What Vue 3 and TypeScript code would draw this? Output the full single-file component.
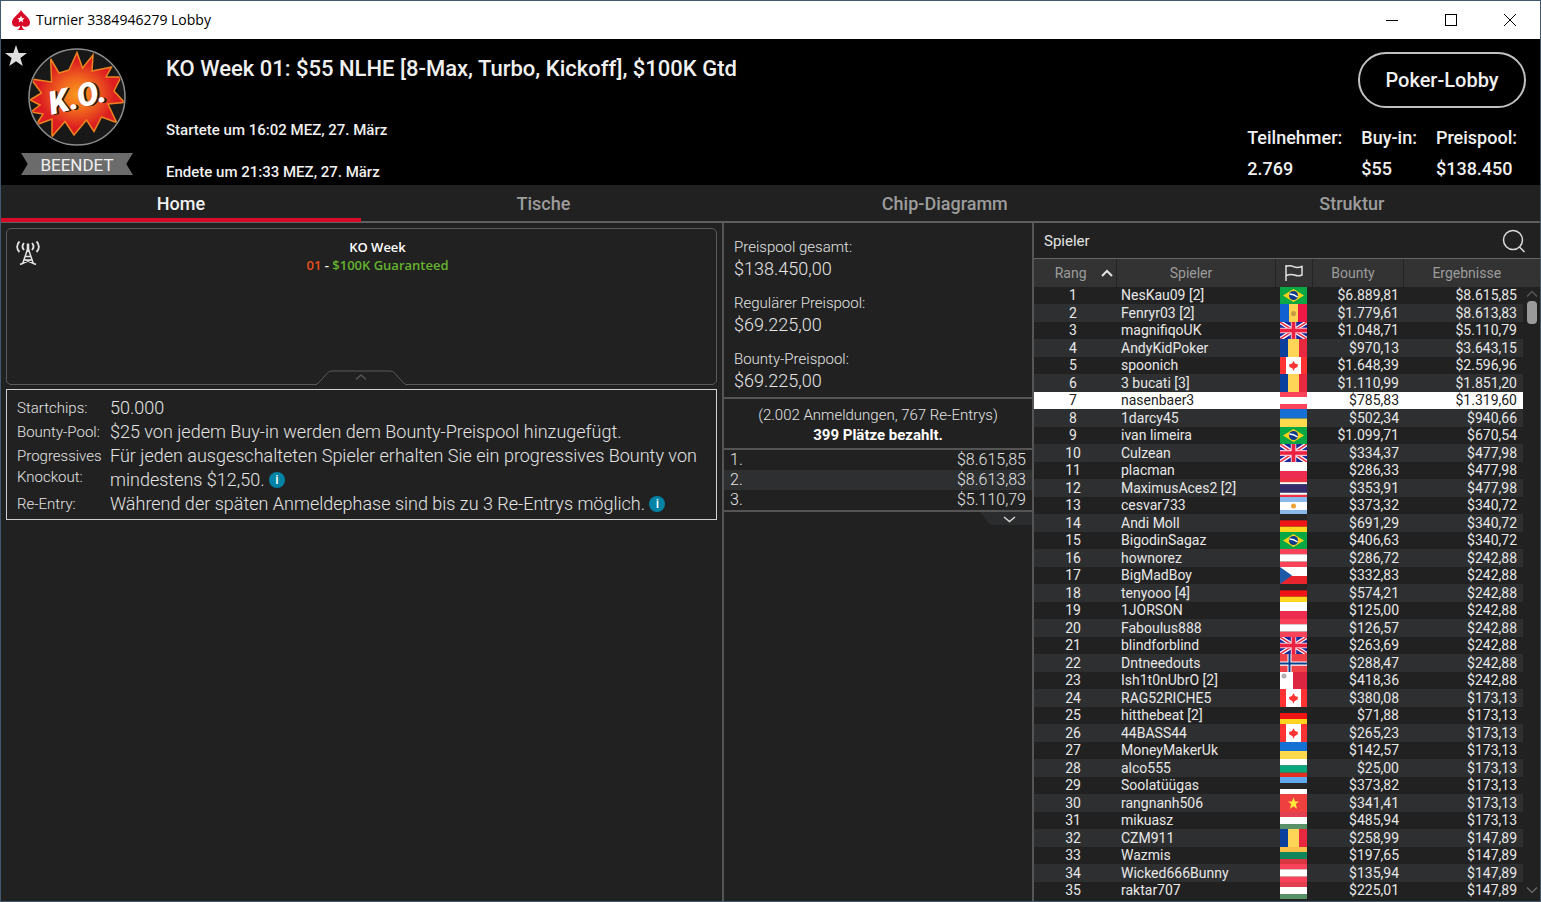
<script setup lang="ts">
interface Stripe { c: string; s: number }
interface Flag { dir: 'h' | 'v'; stripes: Stripe[] }
interface Player { rank: number; name: string; flag: string; bounty: string; result: string }

const tabs = ['Home', 'Tische', 'Chip-Diagramm', 'Struktur']

const stats = [
  { label: 'Teilnehmer:', value: '2.769' },
  { label: 'Buy-in:', value: '$55' },
  { label: 'Preispool:', value: '$138.450' },
]

const pools = [
  { label: 'Preispool gesamt:', value: '$138.450,00' },
  { label: 'Regulärer Preispool:', value: '$69.225,00' },
  { label: 'Bounty-Preispool:', value: '$69.225,00' },
]

const payouts = [
  { place: '1.', amount: '$8.615,85' },
  { place: '2.', amount: '$8.613,83' },
  { place: '3.', amount: '$5.110,79' },
]

const details = [
  { label: 'Startchips:', text: '50.000', info: false },
  { label: 'Bounty-Pool:', text: '$25 von jedem Buy-in werden dem Bounty-Preispool hinzugefügt.', info: false },
  { label: 'Progressives Knockout:', text: 'Für jeden ausgeschalteten Spieler erhalten Sie ein progressives Bounty von mindestens $12,50.', info: true },
  { label: 'Re-Entry:', text: 'Während der späten Anmeldephase sind bis zu 3 Re-Entrys möglich.', info: true },
]

const stripes = (dir: 'h' | 'v', ...parts: [string, number][]): Flag => ({
  dir,
  stripes: parts.map(([c, s]) => ({ c, s })),
})

const flags: Record<string, Flag> = {
  br: stripes('h', ['#0aa844', 17]),
  ad: stripes('v', ['#1160d2', 9], ['#fdd350', 9], ['#ee1846', 9]),
  gb: stripes('h', ['#1a2a9c', 17]),
  ro: stripes('v', ['#0b3f9e', 8], ['#ffd558', 11], ['#e8283f', 8]),
  ca: stripes('v', ['#ff3333', 6], ['#ffffff', 15], ['#ff3333', 6]),
  at: stripes('h', ['#f9435a', 5], ['#ffffff', 7], ['#f9435a', 5]),
  ua: stripes('h', ['#1670d4', 9], ['#ffd94e', 8]),
  pl: stripes('h', ['#ffffff', 9], ['#ec2d50', 8]),
  th: stripes('h', ['#f03040', 3], ['#ffffff', 2], ['#322c6b', 8], ['#ffffff', 2], ['#f03040', 2]),
  ar: stripes('h', ['#89b9ea', 5], ['#ffffff', 8], ['#89b9ea', 4]),
  de: stripes('h', ['#262626', 6], ['#f01414', 6], ['#ffd520', 5]),
  cz: stripes('h', ['#ffffff', 9], ['#e8252c', 8]),
  no: stripes('h', ['#ef4147', 17]),
  mt: stripes('v', ['#ffffff', 13], ['#dc2540', 14]),
  bg: stripes('h', ['#ffffff', 6], ['#0aa87c', 7], ['#e03020', 4]),
  ee: stripes('h', ['#5fa8ee', 6], ['#262626', 6], ['#ffffff', 5]),
  vn: stripes('h', ['#ef4040', 17]),
  hu: stripes('h', ['#e04050', 5], ['#ffffff', 7], ['#589068', 5]),
  lt: stripes('h', ['#fcc04a', 5], ['#12855c', 7], ['#d83640', 5]),
}

const flagRects = (code: string) => {
  const flag = flags[code]
  let at = 0
  return flag.stripes.map(({ c, s }) => {
    const rect = flag.dir === 'h'
      ? { x: 0, y: at, width: 27, height: s, fill: c }
      : { x: at, y: 0, width: s, height: 17, fill: c }
    at += s
    return rect
  })
}

const rows: [string, string, string, string][] = [
  ['NesKau09 [2]', 'br', '6.889,81', '8.615,85'],
  ['Fenryr03 [2]', 'ad', '1.779,61', '8.613,83'],
  ['magnifiqoUK', 'gb', '1.048,71', '5.110,79'],
  ['AndyKidPoker', 'ro', '970,13', '3.643,15'],
  ['spoonich', 'ca', '1.648,39', '2.596,96'],
  ['3 bucati [3]', 'ro', '1.110,99', '1.851,20'],
  ['nasenbaer3', 'at', '785,83', '1.319,60'],
  ['1darcy45', 'ua', '502,34', '940,66'],
  ['ivan limeira', 'br', '1.099,71', '670,54'],
  ['Culzean', 'gb', '334,37', '477,98'],
  ['placman', 'pl', '286,33', '477,98'],
  ['MaximusAces2 [2]', 'th', '353,91', '477,98'],
  ['cesvar733', 'ar', '373,32', '340,72'],
  ['Andi Moll', 'de', '691,29', '340,72'],
  ['BigodinSagaz', 'br', '406,63', '340,72'],
  ['hownorez', 'at', '286,72', '242,88'],
  ['BigMadBoy', 'cz', '332,83', '242,88'],
  ['tenyooo [4]', 'de', '574,21', '242,88'],
  ['1JORSON', 'pl', '125,00', '242,88'],
  ['Faboulus888', 'at', '126,57', '242,88'],
  ['blindforblind', 'gb', '263,69', '242,88'],
  ['Dntneedouts', 'no', '288,47', '242,88'],
  ['Ish1t0nUbrO [2]', 'mt', '418,36', '242,88'],
  ['RAG52RICHE5', 'ca', '380,08', '173,13'],
  ['hitthebeat [2]', 'de', '71,88', '173,13'],
  ['44BASS44', 'ca', '265,23', '173,13'],
  ['MoneyMakerUk', 'ua', '142,57', '173,13'],
  ['alco555', 'bg', '25,00', '173,13'],
  ['Soolatüügas', 'ee', '373,82', '173,13'],
  ['rangnanh506', 'vn', '341,41', '173,13'],
  ['mikuasz', 'hu', '485,94', '173,13'],
  ['CZM911', 'ro', '258,99', '147,89'],
  ['Wazmis', 'lt', '197,65', '147,89'],
  ['Wicked666Bunny', 'at', '135,94', '147,89'],
  ['raktar707', 'hu', '225,01', '147,89'],
]

const players: Player[] = rows.map(([name, flag, bounty, result], i) => ({
  rank: i + 1, name, flag, bounty: '$' + bounty, result: '$' + result,
}))
</script>

<template>
  <div class="window">
    <div class="titlebar">
      <svg class="spade" width="20" height="22" viewBox="0 0 20 22" aria-hidden="true">
        <path d="M10 1C8 5 1 8.500 1 13.500C1 18 6 19 9 16.500C9 19 8 20 6 21H14C12 20 11 19 11 16.500C14 19 19 18 19 13.500C19 8.500 12 5 10 1Z" fill="#d70a28" />
        <path d="M10 6.500L11 9L13.600 9.200L11.600 10.900L12.300 13.500L10 12L7.700 13.500L8.400 10.900L6.400 9.200L9 9Z" fill="#fff" />
      </svg>
      <span class="caption">Turnier 3384946279 Lobby</span>
      <div class="controls">
        <button type="button" aria-label="Minimieren"><svg width="12" height="12" viewBox="0 0 12 12" shape-rendering="crispEdges"><path d="M0 6H12V7H0Z" fill="#000" /></svg></button>
        <button type="button" aria-label="Maximieren"><svg width="12" height="12" viewBox="0 0 12 12" shape-rendering="crispEdges"><rect x="0.5" y="0.5" width="11" height="11" fill="none" stroke="#000" /></svg></button>
        <button type="button" aria-label="Schließen"><svg width="12" height="12" viewBox="0 0 12 12"><path d="M0 0L12 12M12 0L0 12" stroke="#000" /></svg></button>
      </div>
    </div>

    <header class="header">
      <div class="badge">
        <svg class="star" width="22" height="22" viewBox="0 0 22 22" aria-hidden="true">
          <path d="M11 0L13.700 7.900L22 8L15.400 13L17.800 21L11 16.300L4.200 21L6.600 13L0 8L8.300 7.900Z" fill="#dedede" />
        </svg>
        <svg class="logo" width="98" height="98" viewBox="0 0 98 98" role="img" aria-label="K.O.">
          <defs>
            <radialGradient id="blast"><stop offset="0" stop-color="#f99a1c" /><stop offset="0.4" stop-color="#f0641e" /><stop offset="0.8" stop-color="#dc1e20" /></radialGradient>
            <clipPath id="disc"><circle cx="49" cy="49" r="47" /></clipPath>
          </defs>
          <circle cx="49" cy="49" r="48" fill="#181818" stroke="#8d8d8d" stroke-width="1.500" />
          <g clip-path="url(#disc)">
            <path d="M22.700 11L31 25L41 22L49 4.500L54.500 20L65 7L64 23L83.500 19L78 29L93 29L86 43L96.500 54.500L80 56L88.500 74.500L73.500 69L66 83.500L58.500 72L46 87L37 73.500L24 88.500L24 71L8 77L15 66L3 64L12 57L2 52L13.500 45L3 31L23.500 34Z" fill="url(#blast)" stroke="#ee8420" stroke-width="1.500" />
          </g>
          <g transform="rotate(-14 49 49)" class="ko">
            <text x="51" y="61" text-anchor="middle" fill="#2a1a14">K.O.</text>
            <text x="49" y="60" text-anchor="middle" fill="#fff">K.O.</text>
          </g>
        </svg>
        <span class="ribbon">BEENDET</span>
      </div>
      <div class="event">
        <h1>KO Week 01: $55 NLHE [8-Max, Turbo, Kickoff], $100K Gtd</h1>
        <p>Startete um 16:02 MEZ, 27. März</p>
        <p>Endete um 21:33 MEZ, 27. März</p>
      </div>
      <div class="summary">
        <button type="button" class="lobby">Poker-Lobby</button>
        <dl class="stats">
          <div v-for="s in stats" :key="s.label"><dt>{{ s.label }}</dt><dd>{{ s.value }}</dd></div>
        </dl>
      </div>
    </header>

    <nav class="tabs">
      <button v-for="(t, i) in tabs" :key="t" type="button" :class="{ active: i === 0 }">{{ t }}</button>
    </nav>

    <main class="content">
      <section class="left">
        <div class="promo">
          <svg class="antenna" width="24" height="26" viewBox="0 0 24 26" fill="none" stroke="#e4e4e4" stroke-width="1.500" aria-hidden="true">
            <path d="M12 8L6.500 24M12 8L17.500 24M9.500 16.500H14.500M8 20H16M4 24.500L15.500 19.500M20 24.500L8.500 19.500" />
            <path d="M12 3.500V12" stroke-width="2.500" />
            <path d="M8 3C6.300 5 6.300 8 8 10M16 3C17.700 5 17.700 8 16 10M3.500 1.500C0.300 4.500 0.300 9 3.500 12M20.500 1.500C23.700 4.500 23.700 9 20.500 12" stroke-width="1.800" />
          </svg>
          <p class="promo-text">KO Week<br><span class="num">01</span> - <span class="gtd">$100K Guaranteed</span></p>
          <button type="button" class="collapse" aria-label="Einklappen">
            <svg width="88" height="15" viewBox="0 0 88 15" fill="none">
              <path d="M0 14H2L10 4C12 2 13 1.500 16 1.500H72C75 1.500 76 2 78 4L86 14H88V15H0Z" fill="#212121" />
              <path d="M0 13.500H1L10 3.500C12 1.500 13 1 16 1H72C75 1 76 1.500 78 3.500L87 13.500H88" stroke="#5a5a5a" />
              <path d="M39 9.500L44 5L49 9.500" stroke="#555" stroke-width="1.500" />
            </svg>
          </button>
        </div>
        <dl class="details">
          <template v-for="d in details" :key="d.label">
            <dt>{{ d.label }}</dt>
            <dd>{{ d.text }} <button v-if="d.info" type="button" class="info" aria-label="Info">i</button></dd>
          </template>
        </dl>
      </section>

      <section class="middle">
        <dl class="pools">
          <template v-for="p in pools" :key="p.label"><dt>{{ p.label }}</dt><dd>{{ p.value }}</dd></template>
        </dl>
        <div class="entries"><p>(2.002 Anmeldungen, 767 Re-Entrys)</p><p class="paid">399 Plätze bezahlt.</p></div>
        <table class="payouts">
          <tbody><tr v-for="p in payouts" :key="p.place"><td>{{ p.place }}</td><td>{{ p.amount }}</td></tr></tbody>
        </table>
        <button type="button" class="expand" aria-label="Mehr anzeigen">
          <svg width="52" height="14" viewBox="0 0 52 14" fill="none"><path d="M0 0H52V13H14C10 13 9 12 7 9Z" fill="#2b2c2d" /><path d="M24 5L29.500 9.500L35 5" stroke="#d8d8d8" stroke-width="1.500" /></svg>
        </button>
      </section>

      <section class="right">
        <div class="search">
          <h2>Spieler</h2>
          <button type="button" aria-label="Suchen"><svg width="24" height="24" viewBox="0 0 24 24" fill="none" stroke="#dcdcdc" stroke-width="1.500"><circle cx="11" cy="11" r="9.500" /><path d="M17.500 18L22.500 23" /></svg></button>
        </div>
        <div class="list">
          <table class="players">
            <colgroup><col class="c-rank"><col class="c-name"><col class="c-flag"><col class="c-bounty"><col></colgroup>
            <thead>
              <tr>
                <th scope="col"><span class="rank-head">Rang <svg width="12" height="8" viewBox="0 0 12 8" fill="none"><path d="M1 7L6 2L11 7" stroke="#e4e4e4" stroke-width="2" /></svg></span></th>
                <th scope="col" class="shifted">Spieler</th>
                <th scope="col" aria-label="Land"><svg class="pennant" width="18" height="16" viewBox="0 0 18 16" fill="none" stroke="#e0e0e0" stroke-width="1.500"><path d="M1 0V16M1 1.500C5 0 7 1 9.500 2C12 3 14 2.500 17 1.500V10C14 11.500 12 11 9.500 10C7 9 5 9 1 10.500" /></svg></th>
                <th scope="col" class="shifted">Bounty</th>
                <th scope="col">Ergebnisse</th>
              </tr>
            </thead>
            <tbody>
              <tr v-for="p in players" :key="p.rank" :class="{ me: p.rank === 7 }">
                <td>{{ p.rank }}</td>
                <td>{{ p.name }}</td>
                <td>
                  <svg class="flag" viewBox="0 0 27 17" preserveAspectRatio="none" aria-hidden="true">
                    <rect v-for="(r, i) in flagRects(p.flag)" :key="i" v-bind="r" />
                    <g v-if="p.flag === 'br'"><path d="M13.500 2L24 8.500L13.500 15L3 8.500Z" fill="#fbd116" /><circle cx="13.500" cy="8.500" r="4.500" fill="#0b3a8c" /><path d="M9.500 7C12 7 15 8 17.500 10" stroke="#fff" stroke-width="1.500" fill="none" /></g>
                    <g v-else-if="p.flag === 'gb'" fill="none">
                      <path d="M0 0L27 17M27 0L0 17" stroke="#fff" stroke-width="4" /><path d="M0 0L27 17M27 0L0 17" stroke="#ec3048" stroke-width="1.500" />
                      <path d="M13.500 0V17M0 8.500H27" stroke="#f4c4d0" stroke-width="5.500" /><path d="M13.500 0V17M0 8.500H27" stroke="#ec2040" stroke-width="3.500" />
                    </g>
                    <path v-else-if="p.flag === 'ca'" d="M13.500 4L15 6.500L18 7.500L17.500 10L14.500 11.500L13.500 14L12.500 11.500L9.500 10L9 7.500L12 6.500Z" fill="#ff3333" />
                    <path v-else-if="p.flag === 'cz'" d="M0 0L12 8.500L0 17Z" fill="#1c5aa5" />
                    <path v-else-if="p.flag === 'vn'" d="M13.500 3L15 7L19 7L15.800 9.500L17 14L13.500 11.500L10 14L11.200 9.500L8 7L12 7Z" fill="#ffea3a" />
                    <circle v-else-if="p.flag === 'ad'" cx="13.500" cy="9" r="2.500" fill="#c79a45" />
                    <circle v-else-if="p.flag === 'ar'" cx="13.500" cy="9" r="2.500" fill="#eda33c" />
                    <circle v-else-if="p.flag === 'mt'" cx="4" cy="4" r="2.500" fill="#b4b0b0" />
                    <g v-else-if="p.flag === 'no'"><path d="M9.500 0V17M0 9H27" stroke="#fff" stroke-width="4" /><path d="M9.500 0V17M0 9H27" stroke="#0b4090" stroke-width="2" /></g>
                  </svg>
                </td>
                <td>{{ p.bounty }}</td>
                <td>{{ p.result }}</td>
              </tr>
            </tbody>
          </table>
          <div class="rail" aria-hidden="true">
            <div class="rail-head"></div>
            <svg width="12" height="14" viewBox="0 0 12 14" fill="none"><path d="M1 9.500L6 4.500L11 9.500" stroke="#555" stroke-width="1.500" /></svg>
            <div class="thumb"></div>
            <svg class="down" width="12" height="14" viewBox="0 0 12 14" fill="none"><path d="M1 4.500L6 9.500L11 4.500" stroke="#666" stroke-width="1.500" /></svg>
          </div>
        </div>
      </section>
    </main>
  </div>
</template>

<style>
body { margin: 0; background: #212121; }
</style>

<style scoped>
* { box-sizing: border-box; margin: 0; }
button { border: 0; padding: 0; background: none; color: inherit; font: inherit; cursor: pointer; }
svg { display: block; }
.window { min-height: 100vh; display: flex; flex-direction: column; border: 1px solid #43586c; background: #212121; color: #e4e4e4; font-family: Roboto, "Liberation Sans", sans-serif; }

.titlebar { display: flex; align-items: center; height: 38px; padding: 0 1px 0 10px; background: #fff; color: #000; }
.caption { margin-left: 5px; padding-bottom: 2px; font: 14px "Open Sans", "Noto Sans", sans-serif; }
.controls { display: flex; margin-left: auto; }
.controls button { display: grid; place-items: center; width: 59px; height: 38px; }

.header { display: flex; min-height: 146px; background: #000; color: #f0f0f0; }
.badge { position: relative; width: 152px; display: flex; flex-direction: column; align-items: center; padding-top: 9px; }
.star { position: absolute; left: 4px; top: 6px; }
.ko { font: italic 900 32px Roboto, sans-serif; }
.ribbon { width: 112px; height: 22px; margin-top: 7px; background: #6b6b6b; color: #f0f0f0; font-size: 17px; font-weight: 400; line-height: 24px; text-align: center; clip-path: polygon(0 0, 100% 0, 94% 50%, 100% 100%, 0 100%, 6% 50%); }
.event { flex: 1; padding: 17px 0 0 13px; }
.event h1 { font-size: 22px; font-weight: 500; line-height: 26px; }
.event p { margin-top: 20px; font-size: 15px; font-weight: 500; line-height: 22px; }
.event h1 + p { margin-top: 37px; }
.summary { display: flex; flex-direction: column; align-items: flex-end; padding: 13px 14px 0 0; }
.lobby { width: 168px; height: 56px; border: 2px solid #c0c0c0; border-radius: 28px; font-size: 20px; font-weight: 500; }
.stats { display: flex; gap: 19px; margin-top: 14px; padding-right: 9px; font-size: 18px; font-weight: 500; line-height: 31px; }
.stats dd { margin: 0; }

.tabs { display: flex; border-bottom: 2px solid #5e5e5e; color: #9c9c9c; font-size: 18px; font-weight: 500; }
.tabs button { flex: 1 1 auto; height: 37px; margin-bottom: -1px; padding-top: 3px; border-bottom: 4px solid transparent; line-height: 32px; }
.tabs .active { border-color: #d70a28; color: #f0f0f0; }

.content { flex: 1; display: grid; grid-template-columns: minmax(0, 1fr) 310px 508px; }
.left { padding: 5px 5px 0; }
.promo { position: relative; height: 157px; border: 1px solid #5a5a5a; border-radius: 5px; }
.antenna { position: absolute; left: 9px; top: 11px; }
.promo-text { padding-top: 9px; padding-left: 32px; color: #fff; font: 600 13px/18px "Open Sans", sans-serif; text-align: center; }
.num { color: #e8501c; }
.gtd { color: #65b32e; }
.collapse { position: absolute; left: 50%; bottom: -1px; margin-left: -45px; }
.details { display: grid; grid-template-columns: 93px 1fr; margin-top: 4px; padding: 6px 10px 3px; border: 1px solid #d0d0d0; font-weight: 300; }
.details dt { padding-top: 2px; font-size: 15px; line-height: 21px; }
.details dd { margin: 0; font-size: 18px; line-height: 24px; }
.info { width: 16px; height: 16px; border-radius: 50%; background: #0083a5; color: #fff; font-size: 13px; font-weight: 500; line-height: 16px; vertical-align: 2px; }

.middle { border-left: 2px solid #555; }
.pools { padding: 13px 10px 5px; font-weight: 300; }
.pools dt { font-size: 15px; line-height: 22px; }
.pools dd { margin: 0 0 12px; font-size: 18px; line-height: 22px; }
.pools dd:last-child { margin: 0; }
.entries { padding: 6px 0 3px; border-top: 2px solid #555; border-bottom: 2px solid #555; text-align: center; font-size: 15px; font-weight: 300; line-height: 20px; }
.paid { color: #fff; font-weight: 700; }
.payouts { width: 100%; border-collapse: collapse; border-bottom: 2px solid #555; font-size: 16px; font-weight: 300; line-height: 20px; }
.payouts td { padding: 0 6px; }
.payouts td:last-child { text-align: right; }
.payouts tr:nth-child(2) { background: #2d2f31; }
.expand { display: block; margin-left: auto; }

.right { border-left: 2px solid #555; display: flex; flex-direction: column; }
.search { display: flex; align-items: center; justify-content: space-between; height: 36px; padding: 0 14px 0 10px; border-bottom: 1px solid #666; }
.search h2 { font-size: 15px; font-weight: 400; }
.list { flex: 1; display: flex; }
.players { flex: 1; height: 0; table-layout: fixed; border-collapse: collapse; font-size: 14px; color: #e8e8e8; }
.c-rank { width: 82px; }
.c-name { width: 159px; }
.c-flag { width: 37px; }
.c-bounty { width: 91px; }
.players th { height: 28px; padding: 0; border-right: 1px solid #242424; background: #333; color: #9c9c9c; font-weight: 400; }
.players .shifted { padding-right: 9px; }
.players th:last-child { border-right: 0; padding-left: 7px; }
.rank-head { display: flex; align-items: center; justify-content: flex-end; gap: 14px; padding-right: 3px; }
.pennant { margin: 0 auto; }
.flag { width: 27px; height: 17px; }
.players td { height: 17px; padding: 0; line-height: 17px; white-space: nowrap; }
.players tr:nth-child(even) td { height: 18px; background: #2d2f31; }
.players tr:nth-child(even) .flag { height: 18px; }
.players .me td { background: #fff; color: #212121; }
.players td:nth-child(1) { text-align: center; padding-right: 4px; }
.players td:nth-child(2) { padding-left: 5px; }
.players td:nth-child(3) { padding-left: 5px; }
.players td:nth-child(4) { text-align: right; padding-right: 4px; }
.players td:nth-child(5) { text-align: right; padding-right: 6px; }
.rail { width: 17px; display: flex; flex-direction: column; align-items: center; padding-bottom: 4px; }
.rail-head { align-self: stretch; height: 28px; background: #333; }
.thumb { width: 10px; height: 23px; border-radius: 4px; background: #9a9a9a; }
.down { margin-top: auto; }
</style>
